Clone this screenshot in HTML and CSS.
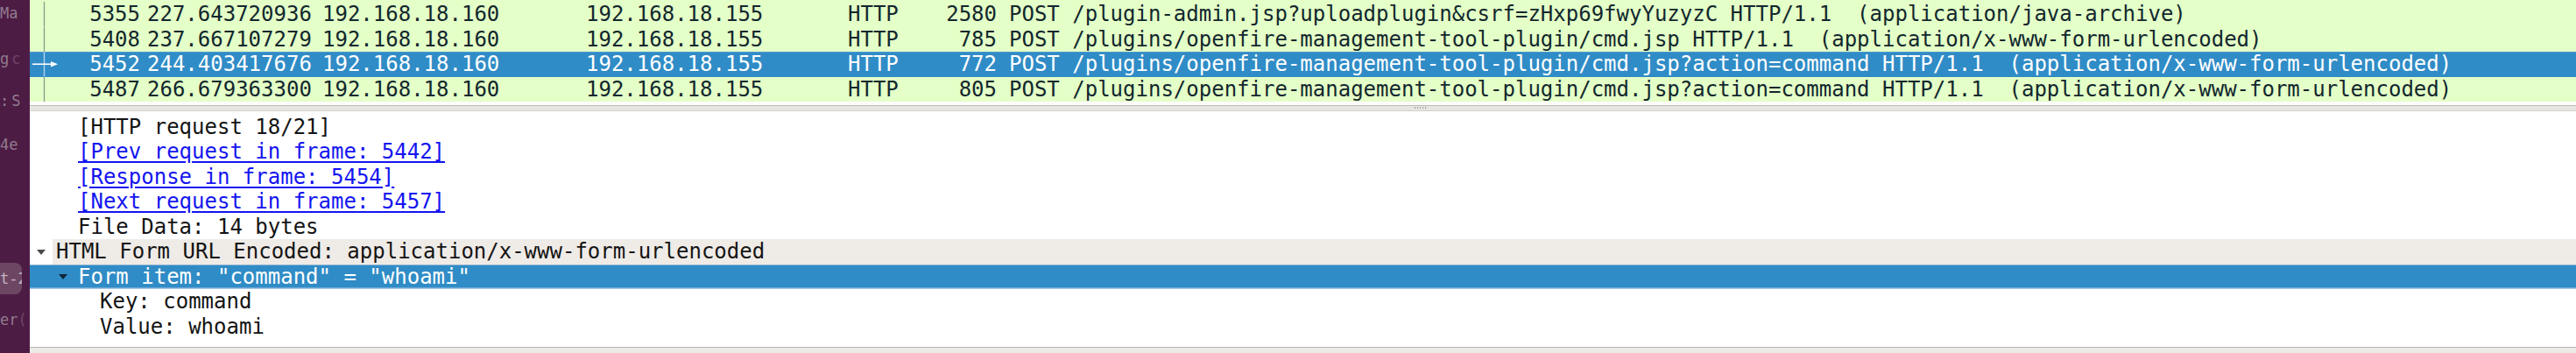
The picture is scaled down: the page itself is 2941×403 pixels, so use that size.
FILE: index.html
```html
<!DOCTYPE html>
<html lang="en">
<head>
<meta charset="utf-8">
<title>Wireshark</title>
<link rel="stylesheet" href="styles.css">
</head>
<body>
<div class="screen">
  <aside class="dock">
    <div class="dl d1">Ma</div>
    <div class="dl d2">g<span class="fade gap">c</span></div>
    <div class="dl d3">:<span class="gap">S</span></div>
    <div class="dl d4">4e</div>
    <div class="dl dblock">t-2</div>
    <div class="dl d6">er<span class="fade">(</span></div>
  </aside>
  <main class="app">
    <section class="plist">
      <div class="prow">
        <div class="ind"><svg viewBox="0 0 64 28.5"><line x1="16.5" y1="0" x2="16.5" y2="28.5" class="vline"/></svg></div>
        <div class="c no">5355</div>
        <div class="c">227.643720936</div>
        <div class="c">192.168.18.160</div>
        <div class="c">192.168.18.155</div>
        <div class="c">HTTP</div>
        <div class="c len">2580</div>
        <div class="c">POST /plugin-admin.jsp?uploadplugin&amp;csrf=zHxp69fwyYuzyzC HTTP/1.1  (application/java-archive)</div>
      </div>
      <div class="prow">
        <div class="ind"><svg viewBox="0 0 64 28.5"><line x1="16.5" y1="0" x2="16.5" y2="28.5" class="vline"/></svg></div>
        <div class="c no">5408</div>
        <div class="c">237.667107279</div>
        <div class="c">192.168.18.160</div>
        <div class="c">192.168.18.155</div>
        <div class="c">HTTP</div>
        <div class="c len">785</div>
        <div class="c">POST /plugins/openfire-management-tool-plugin/cmd.jsp HTTP/1.1  (application/x-www-form-urlencoded)</div>
      </div>
      <div class="prow sel">
        <div class="ind"><svg viewBox="0 0 64 28.5"><line x1="16.5" y1="0" x2="16.5" y2="28.5" class="vline"/><line x1="3" y1="14.25" x2="26" y2="14.25" class="arrow"/><polygon points="24,11 32,14.25 24,17.5" class="head"/></svg></div>
        <div class="c no">5452</div>
        <div class="c">244.403417676</div>
        <div class="c">192.168.18.160</div>
        <div class="c">192.168.18.155</div>
        <div class="c">HTTP</div>
        <div class="c len">772</div>
        <div class="c">POST /plugins/openfire-management-tool-plugin/cmd.jsp?action=command HTTP/1.1  (application/x-www-form-urlencoded)</div>
      </div>
      <div class="prow">
        <div class="ind"><svg viewBox="0 0 64 28.5"><line x1="16.5" y1="0" x2="16.5" y2="28.5" class="vline"/></svg></div>
        <div class="c no">5487</div>
        <div class="c">266.679363300</div>
        <div class="c">192.168.18.160</div>
        <div class="c">192.168.18.155</div>
        <div class="c">HTTP</div>
        <div class="c len">805</div>
        <div class="c">POST /plugins/openfire-management-tool-plugin/cmd.jsp?action=command HTTP/1.1  (application/x-www-form-urlencoded)</div>
      </div>
    </section>
    <div class="splitter"><span class="grip"></span></div>
    <section class="details">
      <div class="drow lv1"><span class="txt">[HTTP request 18/21]</span></div>
      <div class="drow lv1"><span class="txt"><a class="link" href="#f5442">[Prev request in frame: 5442]</a></span></div>
      <div class="drow lv1"><span class="txt"><a class="link" href="#f5454">[Response in frame: 5454]</a></span></div>
      <div class="drow lv1"><span class="txt"><a class="link" href="#f5457">[Next request in frame: 5457]</a></span></div>
      <div class="drow lv1"><span class="txt">File Data: 14 bytes</span></div>
      <div class="drow lv0 branch hover"><span class="exp"><span class="tri"></span></span><span class="txt">HTML Form URL Encoded: application/x-www-form-urlencoded</span></div>
      <div class="drow lv1 branch selected"><span class="exp"><span class="tri"></span></span><span class="txt">Form item: "command" = "whoami"</span></div>
      <div class="drow lv2"><span class="txt">Key: command</span></div>
      <div class="drow lv2"><span class="txt">Value: whoami</span></div>
    </section>
    <div class="statusbar"></div>
  </main>
</div>
</body>
</html>
```

FILE: styles.css
```css
* {
  box-sizing: border-box;
  margin: 0;
  padding: 0;
}

html,
body {
  width: 2941px;
  height: 403px;
  overflow: hidden;
  background: #edebe8;
}

body {
  font-family: "DejaVu Sans Mono", monospace;
  font-size: 24px;
}

.screen {
  display: flex;
  width: 2941px;
  height: 403px;
}

/* left dock strip (terminal behind) */
.dock {
  width: 34px;
  flex: none;
  background: #4d1c45;
  display: flex;
  flex-direction: column;
  overflow: hidden;
  font-family: "DejaVu Sans Mono", monospace;
  font-size: 17px;
  color: #927b8e;
}

.dl {
  height: 28px;
  line-height: 28px;
  white-space: pre;
}

.d1 { margin-top: 1px; }
.d2 { margin-top: 24px; }
.d3 { margin-top: 20px; }
.d4 { margin-top: 22px; }
.dblock {
  margin-top: 121px;
  height: 36px;
  line-height: 36px;
  width: 25px;
  background: #6c4663;
  border-radius: 0 8px 8px 0;
  color: #c4b3c0;
  overflow: hidden;
}
.d6 { margin-top: 15px; }

.gap {
  margin-left: 3px;
}

.fade {
  color: #6e4466;
}

/* main application area */
.app {
  flex: 1;
  min-width: 0;
  display: flex;
  flex-direction: column;
}

.plist {
  height: 116px;
  padding-top: 2px;
  background: #e4ffc7;
  color: #12272e;
  overflow: hidden;
  flex: none;
}

.prow {
  display: grid;
  grid-template-columns: 64px 70px 200px 301px 299px 112px 72px 1fr;
  height: 28.5px;
  line-height: 28.5px;
  white-space: pre;
}

.prow.sel {
  background: #308cc6;
  color: #ffffff;
  box-shadow: inset 0 1px 0 #4f9bd0;
}

.no {
  text-align: right;
  padding-right: 8px;
}

.len {
  text-align: right;
  padding-right: 14px;
}

.ind svg {
  display: block;
  width: 64px;
  height: 28.5px;
}

.vline {
  stroke: #87988a;
  stroke-width: 1.3;
}

.sel .vline {
  stroke: #b8d6ee;
}

.arrow {
  stroke: #ffffff;
  stroke-width: 1.6;
}

.head {
  fill: #ffffff;
}

.splitter {
  height: 11px;
  flex: none;
  background: linear-gradient(#fcfcfc 0 4px, #bdbab5 4px 5px, #e8e6e3 5px 10px, #d4d1cc 10px 11px);
  display: flex;
  align-items: center;
  padding-left: 1580px;
  padding-top: 2px;
}

.grip {
  width: 14px;
  height: 2px;
  background-image: radial-gradient(circle, #a09c96 0.8px, transparent 1px);
  background-size: 3px 2px;
}

.details {
  height: 269px;
  flex: none;
  padding-top: 3.5px;
  background: #ffffff;
  color: #141414;
  overflow: hidden;
}

.drow {
  display: flex;
  height: 28.5px;
  line-height: 28.5px;
  white-space: pre;
}

.lv0 { padding-left: 26px; }
.lv1 { padding-left: 51px; }
.lv2 { padding-left: 76px; }
.lv0.branch { padding-left: 1px; }
.lv1.branch { padding-left: 26px; }

.exp {
  width: 25px;
  flex: none;
  display: flex;
  align-items: center;
}

.tri {
  width: 0;
  height: 0;
  margin-left: 7px;
  margin-top: 1px;
  border-left: 5px solid transparent;
  border-right: 5px solid transparent;
  border-top: 6px solid #4a4a4a;
}

.txt {
  flex: 1;
  padding-left: 4px;
}

.hover .txt {
  background: #efebe7;
}

.selected {
  background: #308cc6;
  color: #ffffff;
  box-shadow: inset 0 1px 0 #8fb3d3, inset 0 -1.5px 0 #a6c8ea;
}

.selected .tri {
  border-top-color: #10253a;
}

.link {
  color: #1414f0;
  text-decoration: underline;
  text-underline-offset: 3px;
}

.statusbar {
  flex: 1;
  border-top: 1px solid #b4b2ae;
  background: #edebe8;
}
```
